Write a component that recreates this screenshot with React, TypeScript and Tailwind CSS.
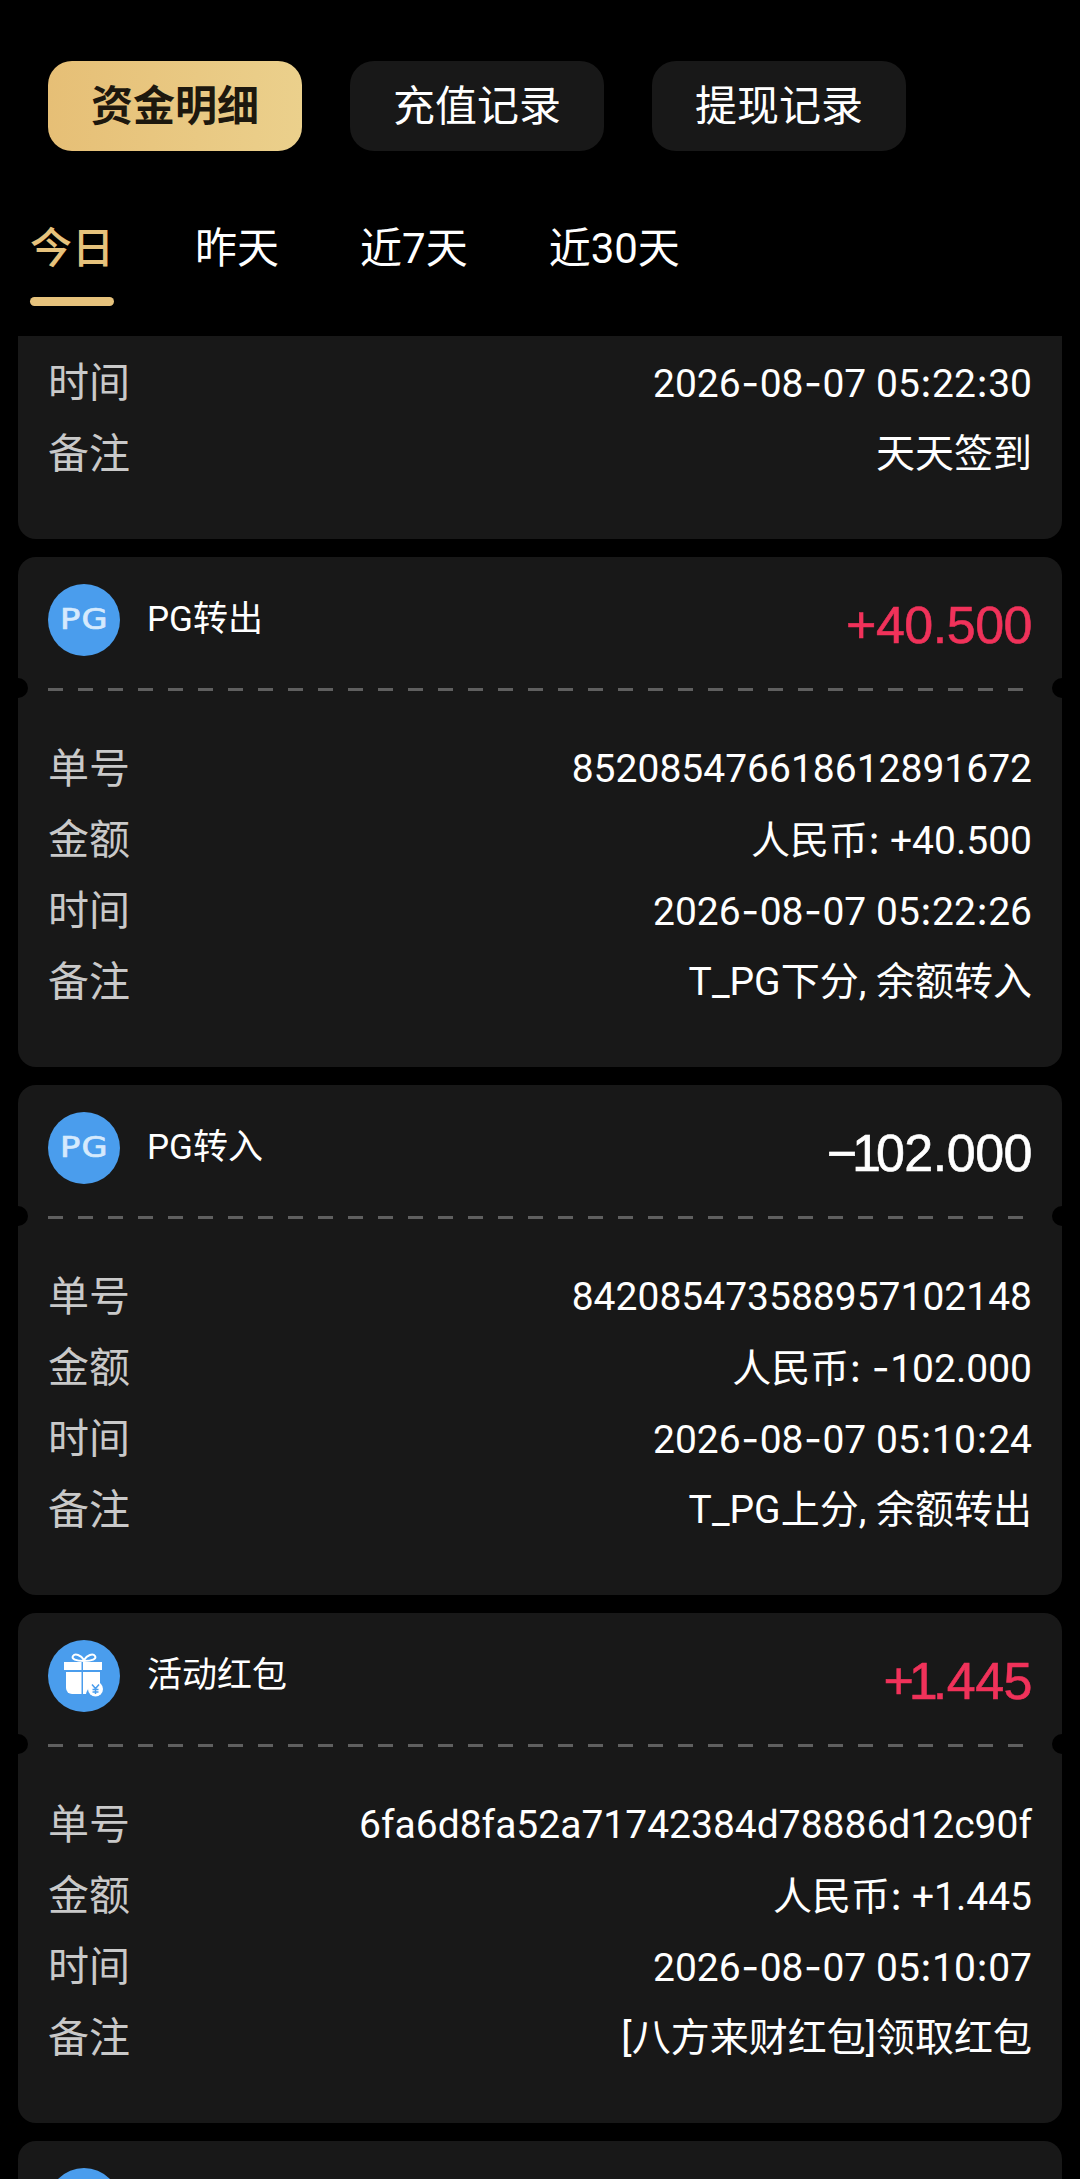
import React from 'react';

type Row = { label: string; value: string };

type Record = {
  icon: 'pg' | 'gift';
  title: string;
  amount: string;
  rows: Row[];
};

const records: Record[] = [
  {
    icon: 'pg',
    title: 'PG转出',
    amount: '+40.500',
    rows: [
      { label: '单号', value: '852085476618612891672' },
      { label: '金额', value: '人民币: +40.500' },
      { label: '时间', value: '2026-08-07 05:22:26' },
      { label: '备注', value: 'T_PG下分, 余额转入' },
    ],
  },
  {
    icon: 'pg',
    title: 'PG转入',
    amount: '−102.000',
    rows: [
      { label: '单号', value: '842085473588957102148' },
      { label: '金额', value: '人民币: -102.000' },
      { label: '时间', value: '2026-08-07 05:10:24' },
      { label: '备注', value: 'T_PG上分, 余额转出' },
    ],
  },
  {
    icon: 'gift',
    title: '活动红包',
    amount: '+1.445',
    rows: [
      { label: '单号', value: '6fa6d8fa52a71742384d78886d12c90f' },
      { label: '金额', value: '人民币: +1.445' },
      { label: '时间', value: '2026-08-07 05:10:07' },
      { label: '备注', value: '[八方来财红包]领取红包' },
    ],
  },
];

function PgIcon() {
  return (
    <div className="w-[72px] h-[72px] rounded-full bg-[#4a9ded] flex items-center justify-center shrink-0">
      <span className="inline-block scale-x-[1.2] text-[#d5eafd] text-[28px] leading-none tracking-[1px] [-webkit-text-stroke:0.7px_#d5eafd] font-['DejaVu_Sans',sans-serif]">PG</span>
    </div>
  );
}

function GiftIcon() {
  return (
    <div className="w-[72px] h-[72px] rounded-full bg-[#4a9ded] shrink-0">
      <svg viewBox="0 0 72 72" className="w-[72px] h-[72px]">
        <path d="M36 20c-3-5-9-7-11-4-2 3 3 5 11 5 8 0 13-2 11-5-2-3-8-1-11 4z" fill="none" stroke="#fff" strokeWidth="2" />
        <rect x="16" y="22" width="17.5" height="8" fill="#fff" />
        <rect x="35" y="22" width="19" height="8" fill="#fff" />
        <path d="M18 32h15.500v22H24a6 6 0 0 1-6-6z" fill="#fff" />
        <path d="M35 32h17v12a13 13 0 0 0-14 10h-3z" fill="#fff" />
        <circle cx="47.500" cy="49" r="7.500" fill="#fff" />
        <path d="M44 44.500l3.500 4 3.500-4M47.500 48.500v5.500M44.500 49.500h6M44.500 52h6" fill="none" stroke="#4a9ded" strokeWidth="1.500" />
      </svg>
    </div>
  );
}

// hyphen and colon are wider in the original font, Inter gets closer than Roboto
function Value({ text }: { text: string }) {
  return (
    <span className="text-white text-[39px]">
      {text.split(/(-|:)/).map((part, i) =>
        part === '-' || part === ':' ? (
          <span key={i} className="font-['Inter',sans-serif] mx-[0.5px]">{part}</span>
        ) : (
          <span key={i}>{part}</span>
        )
      )}
    </span>
  );
}

// the "1" is set narrow in the amount font, so close it up with the sign before it
function Amount({ text }: { text: string }) {
  return (
    <span className={`text-[52px] mt-[10px] font-['Liberation_Sans',sans-serif] tracking-[-0.5px] [-webkit-text-stroke:0.6px_currentColor] ${text.startsWith('+') ? 'text-[#f0325a]' : 'text-white'}`}>
      {text.split(/(.1)/).map((part, i) =>
        i % 2 === 1 ? (
          <span key={i} className="tracking-[-5px]">{part}</span>
        ) : (
          <span key={i}>{part}</span>
        )
      )}
    </span>
  );
}

function Rows({ rows }: { rows: Row[] }) {
  return (
    <div className="flex flex-col">
      {rows.map((row) => (
        <div key={row.label} className="flex items-center justify-between h-[71px]">
          <span className="text-[#c9c9c9] text-[41px]">{row.label}</span>
          <Value text={row.value} />
        </div>
      ))}
    </div>
  );
}

function RecordCard({ record }: { record: Record }) {
  return (
    <div className="relative bg-[#181818] rounded-[18px] h-[510px] shrink-0 overflow-hidden">
      <div className="flex items-center justify-between h-[131px] px-[30px] pb-[5px]">
        <div className="flex items-center gap-[27px]">
          {record.icon === 'pg' ? <PgIcon /> : <GiftIcon />}
          <span className="text-white text-[35px]">{record.title}</span>
        </div>
        <Amount text={record.amount} />
      </div>
      {/* notches + dashed divider */}
      <div className="absolute -left-[10px] top-[121px] w-[20px] h-[20px] rounded-full bg-black" />
      <div className="absolute -right-[10px] top-[121px] w-[20px] h-[20px] rounded-full bg-black" />
      <div className="mx-[30px] h-[3px] bg-[repeating-linear-gradient(90deg,#5f5f5f_0,#5f5f5f_15px,transparent_15px,transparent_30px)]" />
      <div className="px-[30px] pt-[43px]">
        <Rows rows={record.rows} />
      </div>
    </div>
  );
}

export default function App() {
  return (
    <div className="w-[1080px] h-[2179px] bg-black overflow-hidden flex flex-col font-['Roboto','Noto_Sans_CJK_SC',sans-serif]">
      <div className="flex gap-[48px] pt-[61px] pl-[48px]">
        <button className="w-[254px] h-[90px] rounded-[24px] bg-gradient-to-r from-[#e6bf76] to-[#ebd08c] text-[#1d180e] text-[42px] font-bold">资金明细</button>
        <button className="w-[254px] h-[90px] rounded-[24px] bg-[#181818] text-white text-[42px]">充值记录</button>
        <button className="w-[254px] h-[90px] rounded-[24px] bg-[#181818] text-white text-[42px]">提现记录</button>
      </div>

      <div className="flex gap-[81px] pl-[30px] mt-[70px] h-[86px] text-[42px] leading-[56px] text-white">
        <div className="flex flex-col text-[#e6c27c] font-medium">
          今日
          <div className="h-[9px] rounded-full bg-[#e6c27c] mt-[20px]" />
        </div>
        <div>昨天</div>
        <div>近7天</div>
        <div>近30天</div>
      </div>

      <div className="flex flex-col gap-[18px] px-[18px] mt-[30px]">
        <div className="bg-[#181818] rounded-b-[18px] h-[203px] px-[30px] pt-[12px] shrink-0">
          <Rows
            rows={[
              { label: '时间', value: '2026-08-07 05:22:30' },
              { label: '备注', value: '天天签到' },
            ]}
          />
        </div>
        {records.map((record) => (
          <RecordCard key={record.title} record={record} />
        ))}
        <div className="bg-[#181818] rounded-[18px] h-[510px] shrink-0 px-[30px] pt-[27px]">
          <div className="w-[72px] h-[72px] rounded-full bg-[#4a9ded]" />
        </div>
      </div>
    </div>
  );
}
